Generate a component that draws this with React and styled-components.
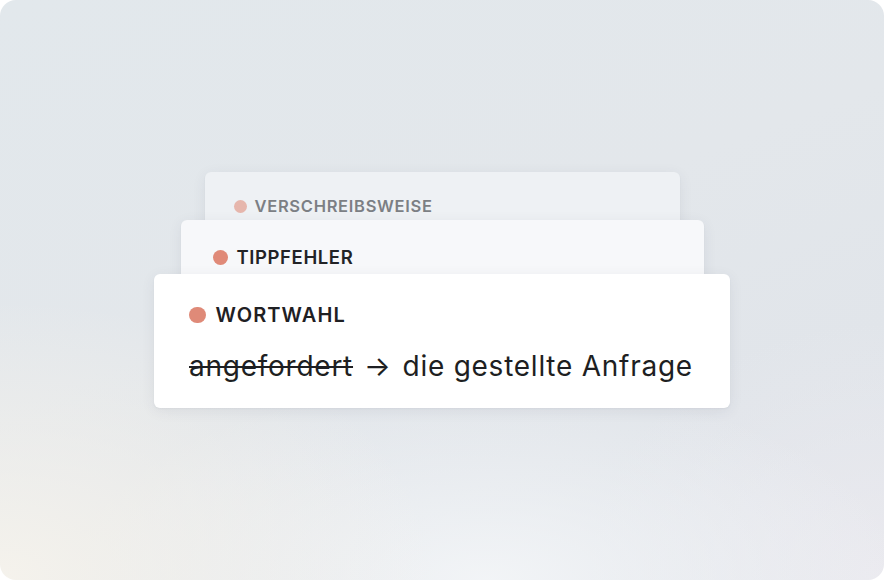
import React from 'react';
import styled, { createGlobalStyle } from 'styled-components';

const GlobalStyle = createGlobalStyle`
  html, body {
    margin: 0;
    padding: 0;
    background: #ffffff;
  }
  body {
    font-family: Inter, "Liberation Sans", sans-serif;
  }
`;

const Frame = styled.div`
  width: 884px;
  height: 580px;
  border-radius: 16px;
  overflow: hidden;
  display: flex;
  align-items: center;
  justify-content: center;
  background:
    radial-gradient(ellipse 440px 280px at 0% 100%, rgba(246, 243, 236, 0.95), rgba(246, 243, 236, 0) 100%),
    radial-gradient(ellipse 420px 200px at 55% 100%, rgba(244, 246, 248, 0.9), rgba(244, 246, 248, 0) 100%),
    radial-gradient(ellipse 300px 260px at 100% 100%, rgba(236, 235, 240, 0.9), rgba(236, 235, 240, 0) 100%),
    linear-gradient(160deg, #e2e8ec 0%, #e3e7eb 45%, #dfe3e9 100%);
`;

const Stack = styled.div`
  display: flex;
  flex-direction: column;
  align-items: center;
`;

const Card = styled.div`
  position: relative;
  z-index: ${(p) => p.$layer};
  box-sizing: border-box;
  width: ${(p) => p.$width}px;
  height: ${(p) => p.$height}px;
  margin-bottom: ${(p) => p.$overlap}px;
  padding: ${(p) => p.$padTop}px ${(p) => p.$padLeft}px 0;
  background: ${(p) => p.$bg};
  border-radius: 6px;
  box-shadow: 0 3px 14px rgba(60, 70, 90, 0.08), 0 1px 2px rgba(60, 70, 90, 0.05);
`;

const Label = styled.div`
  display: flex;
  align-items: center;
  gap: ${(p) => p.$gap}px;
  font-size: ${(p) => p.$size}px;
  font-weight: 600;
  line-height: 1;
  letter-spacing: ${(p) => p.$track}px;
  color: ${(p) => p.$color};
`;

const Dot = styled.span`
  flex: none;
  width: ${(p) => p.$size}px;
  height: ${(p) => p.$size}px;
  border-radius: 50%;
  background: ${(p) => p.$color};
`;

const Suggestion = styled.div`
  margin-top: 27px;
  font-size: 28px;
  line-height: 1;
  font-weight: 400;
  letter-spacing: 0.75px;
  color: #1e1f22;
  white-space: nowrap;
`;

const Removed = styled.span`
  text-decoration: line-through;
  text-decoration-thickness: 1.5px;
`;

const Arrow = styled.span`
  margin: 0 11px;
`;

export default function App() {
  return (
    <>
      <GlobalStyle />
      <Frame>
        <Stack>
          <Card $layer={1} $width={475} $height={90} $overlap={-42} $padTop={26} $padLeft={29} $bg="#eef1f4">
            <Label $gap={8} $size={16.5} $track={0.7} $color="#7c7f84">
              <Dot $size={13} $color="#e6b6ac" />
              VERSCHREIBSWEISE
            </Label>
          </Card>
          <Card $layer={2} $width={523} $height={90} $overlap={-36} $padTop={28} $padLeft={32} $bg="#f7f8fa">
            <Label $gap={9} $size={18.5} $track={0.6} $color="#222326">
              <Dot $size={15} $color="#e08a78" />
              TIPPFEHLER
            </Label>
          </Card>
          <Card $layer={3} $width={576} $height={134} $overlap={0} $padTop={31} $padLeft={35} $bg="#ffffff">
            <Label $gap={10} $size={20} $track={1.1} $color="#1f2023">
              <Dot $size={16.5} $color="#df8a78" />
              WORTWAHL
            </Label>
            <Suggestion>
              <Removed>angefordert</Removed>
              <Arrow>→</Arrow>
              die gestellte Anfrage
            </Suggestion>
          </Card>
        </Stack>
      </Frame>
    </>
  );
}
